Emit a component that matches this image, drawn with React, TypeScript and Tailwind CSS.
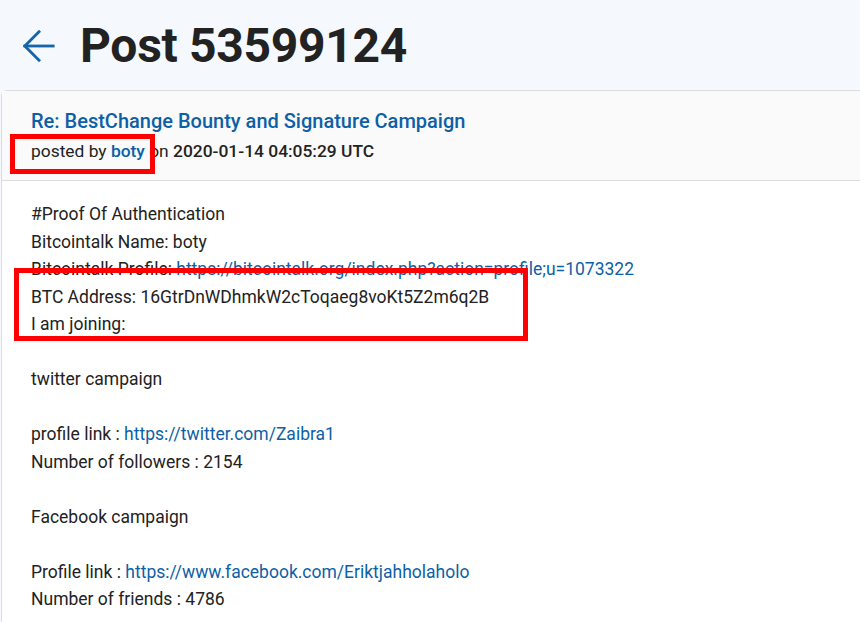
const LINK = "text-[#0d5fa6]"

function Line({ children }: { children?: React.ReactNode }) {
  return <div className="h-[27.5px] whitespace-nowrap">{children}</div>
}

export default function App() {
  return (
    <div
      className="relative flex flex-col w-[860px] h-[622px] overflow-hidden bg-[#f5f9fe] text-[#222]"
      style={{ fontFamily: "Roboto, 'Liberation Sans', sans-serif" }}
    >
      {/* page heading */}
      <div className="flex items-center h-[90px] shrink-0 pl-[22px] pt-[2px]">
        <svg width="34" height="34" viewBox="0 0 24 24" fill="none" stroke="#1565a8" strokeWidth="2" strokeLinecap="square" className="mr-6">
          <line x1="22" y1="12" x2="2" y2="12" />
          <polyline points="12,2 2,12 12,22" />
        </svg>
        <h1 className="text-[48px] font-bold leading-none tracking-[-0.3px]">Post 53599124</h1>
      </div>

      {/* post card */}
      <div className="flex-1 ml-px w-[870px] rounded-tl-md border-l border-t border-[#dcdcdc] bg-white">
        <div className="border-b border-[#dcdcdc] bg-[#fafafa] pl-[29px] pt-[16px] pb-[15px]">
          <div className={`text-xl font-medium leading-7 ${LINK}`}>Re: BestChange Bounty and Signature Campaign</div>
          <div className="text-[17.4px] leading-7 mt-[2px]">
            posted by <span className={`font-medium ${LINK}`}>boty</span> on{" "}
            <span className="font-medium">2020-01-14 04:05:29 UTC</span>
          </div>
        </div>

        <div className="pl-[29px] pt-[20px] text-[17.5px]">
          <Line>#Proof Of Authentication</Line>
          <Line>Bitcointalk Name: boty</Line>
          <Line>
            Bitcointalk Profile: <span className={LINK}>https://bitcointalk.org/index.php?action=profile;u=1073322</span>
          </Line>
          <Line>BTC Address: 16GtrDnWDhmkW2cToqaeg8voKt5Z2m6q2B</Line>
          <Line>I am joining:</Line>
          <Line />
          <Line>twitter campaign</Line>
          <Line />
          <Line>
            profile link : <span className={LINK}>https://twitter.com/Zaibra1</span>
          </Line>
          <Line>Number of followers : 2154</Line>
          <Line />
          <Line>Facebook campaign</Line>
          <Line />
          <Line>
            Profile link : <span className={LINK}>https://www.facebook.com/Eriktjahholaholo</span>
          </Line>
          <Line>Number of friends : 4786</Line>
        </div>
      </div>

      {/* annotation boxes */}
      <div className="absolute left-[10px] top-[134px] w-[145px] h-[40px] border-[5px] border-[#ff0000]" />
      <div className="absolute left-[14px] top-[268px] w-[514px] h-[73px] border-[5px] border-[#ff0000]" />
    </div>
  )
}
